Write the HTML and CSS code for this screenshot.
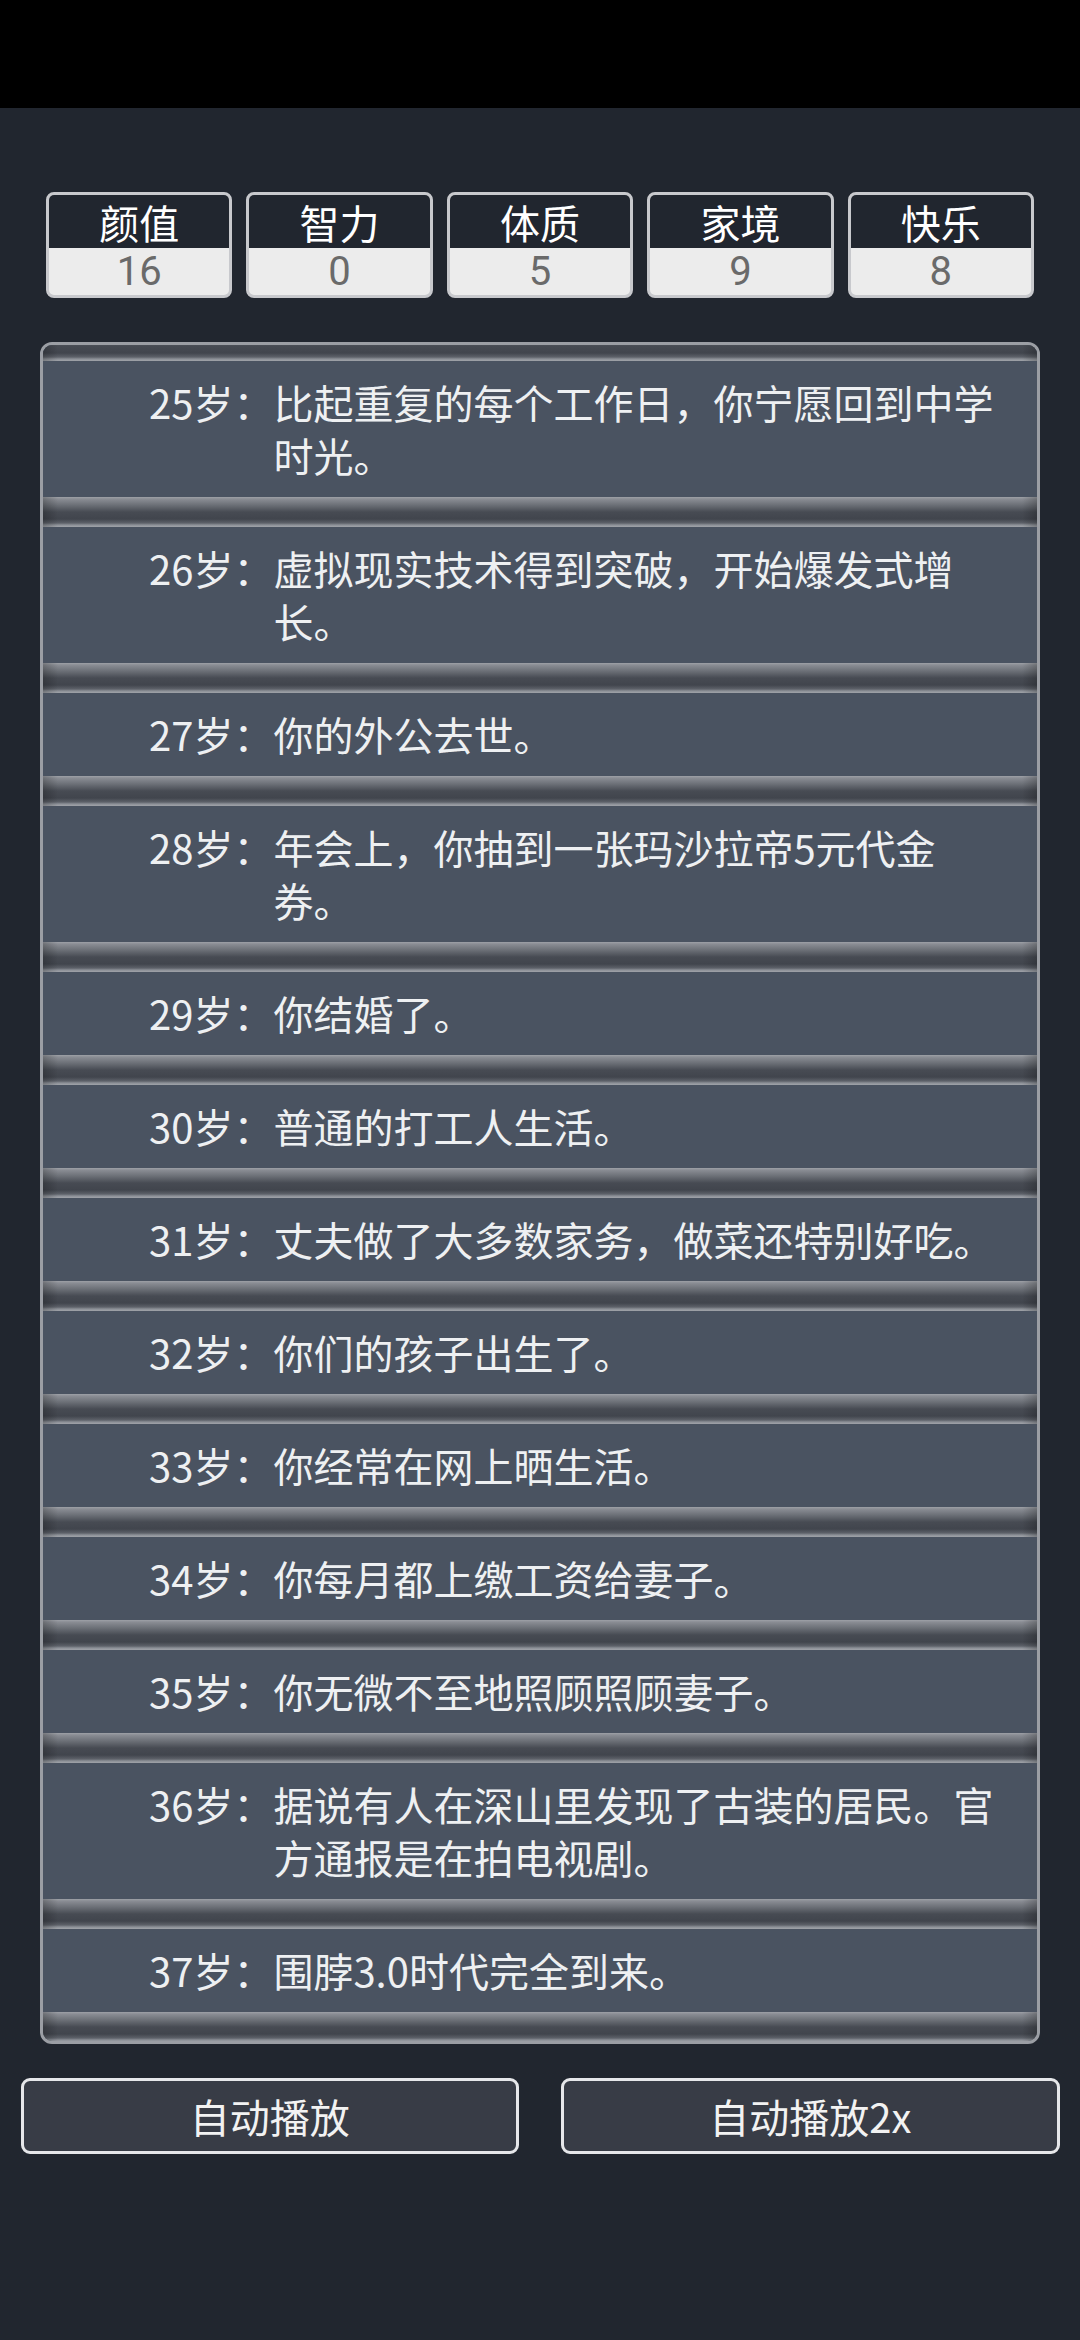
FILE: index.html
```html
<!DOCTYPE html>
<html lang="zh-CN">
<head>
    <meta charset="UTF-8">
    <meta name="viewport" content="width=device-width, initial-scale=1.0">
    <title>人生重开模拟器</title>
    <link rel="stylesheet" href="styles.css">
</head>
<body>

<div class="statusBar"></div>

<div id="game">
    <div class="stats">
        <div class="stat">
            <div class="statName">颜值</div>
            <div class="statValue">16</div>
        </div>
        <div class="stat">
            <div class="statName">智力</div>
            <div class="statValue">0</div>
        </div>
        <div class="stat">
            <div class="statName">体质</div>
            <div class="statValue">5</div>
        </div>
        <div class="stat">
            <div class="statName">家境</div>
            <div class="statValue">9</div>
        </div>
        <div class="stat">
            <div class="statName">快乐</div>
            <div class="statValue">8</div>
        </div>
    </div>

    <div class="log">
        <ul class="logList">
            <li class="event"><span class="age">25岁：</span><span class="text">比起重复的每个工作日，你宁愿回到中学时光。</span></li>
            <li class="event"><span class="age">26岁：</span><span class="text">虚拟现实技术得到突破，开始爆发式增长。</span></li>
            <li class="event"><span class="age">27岁：</span><span class="text">你的外公去世。</span></li>
            <li class="event"><span class="age">28岁：</span><span class="text">年会上，你抽到一张玛沙拉帝5元代金券。</span></li>
            <li class="event"><span class="age">29岁：</span><span class="text">你结婚了。</span></li>
            <li class="event"><span class="age">30岁：</span><span class="text">普通的打工人生活。</span></li>
            <li class="event"><span class="age">31岁：</span><span class="text">丈夫做了大多数家务，做菜还特别好吃。</span></li>
            <li class="event"><span class="age">32岁：</span><span class="text">你们的孩子出生了。</span></li>
            <li class="event"><span class="age">33岁：</span><span class="text">你经常在网上晒生活。</span></li>
            <li class="event"><span class="age">34岁：</span><span class="text">你每月都上缴工资给妻子。</span></li>
            <li class="event"><span class="age">35岁：</span><span class="text">你无微不至地照顾照顾妻子。</span></li>
            <li class="event"><span class="age">36岁：</span><span class="text">据说有人在深山里发现了古装的居民。官方通报是在拍电视剧。</span></li>
            <li class="event"><span class="age">37岁：</span><span class="text">围脖3.0时代完全到来。</span></li>
        </ul>
    </div>

    <div class="controls">
        <button type="button" class="btn">自动播放</button>
        <button type="button" class="btn">自动播放2x</button>
    </div>
</div>

</body>
</html>
```

FILE: styles.css
```css
body {
    margin: 0;
    width: 1080px;
    height: 2340px;
    background-color: #21262f;
    font-family: "Noto Sans CJK SC", "Noto Sans", sans-serif;
    color: #eef0f2;
    overflow: hidden;
}

.statusBar {
    height: 108px;
    background-color: #000;
}

#game {
    display: flex;
    flex-direction: column;
    align-items: center;
}

/* stats row */
.stats {
    display: flex;
    gap: 14px;
    width: 988px;
    margin-top: 84px;
}

.stat {
    flex: 1;
    border: 3px solid #c8c9cd;
    border-radius: 8px;
    background-color: #ececec;
    font-size: 40px;
    line-height: 1;
}

.statName,
.statValue {
    display: flex;
    align-items: center;
    justify-content: center;
}

.statName {
    height: 53px;
    background-color: #21262f;
    border-radius: 5px 5px 0 0;
    color: #fff;
}

.statValue {
    height: 47px;
    border-radius: 0 0 5px 5px;
    font-family: Roboto, "Noto Sans CJK SC", sans-serif;
    color: #6a6a6a;
}

/* event log */
.log {
    width: 994px;
    height: 1696px;
    margin-top: 44px;
    border: 3px solid #9b9ea4;
    border-radius: 12px;
    overflow: hidden;
    background-color: #4a5361;
}

.logList {
    list-style: none;
    margin: -14px 0 0 0;
    padding: 0;
}

.logList::after {
    content: "";
    display: block;
    height: 30px;
    background:
        linear-gradient(to right, rgba(0, 0, 0, 0.22), rgba(0, 0, 0, 0) 1.5%, rgba(0, 0, 0, 0) 98.5%, rgba(0, 0, 0, 0.22)),
        linear-gradient(to bottom, #9ea1a7 0, #8a8d94 2px, #6c7077 8px, #474b53 15px, #41454d 22px, #5d6169 26px, #8c9097 28px, #a0a3a9 30px);
}

.event {
    display: flex;
    padding: 45px 34px 15px 106px;
    font-size: 40px;
    line-height: 53px;
    background:
        linear-gradient(to right, rgba(0, 0, 0, 0.22), rgba(0, 0, 0, 0) 1.5%, rgba(0, 0, 0, 0) 98.5%, rgba(0, 0, 0, 0.22)) top / 100% 30px no-repeat,
        linear-gradient(to bottom, #9ea1a7 0, #8a8d94 2px, #6c7077 8px, #474b53 15px, #41454d 22px, #5d6169 26px, #8c9097 28px, #a0a3a9 30px) top / 100% 30px no-repeat,
        #4a5361;
}

.age {
    flex: none;
}

.text {
    width: 730px;
}

/* buttons */
.controls {
    display: flex;
    gap: 42px;
    width: 1039px;
    margin-top: 34px;
}

.btn {
    flex: 1;
    height: 76px;
    background-color: #383c46;
    border: 3px solid #e6e7ea;
    border-radius: 9px;
    color: #f2f2f2;
    font-family: inherit;
    font-size: 40px;
    padding: 0;
    cursor: pointer;
}
```
